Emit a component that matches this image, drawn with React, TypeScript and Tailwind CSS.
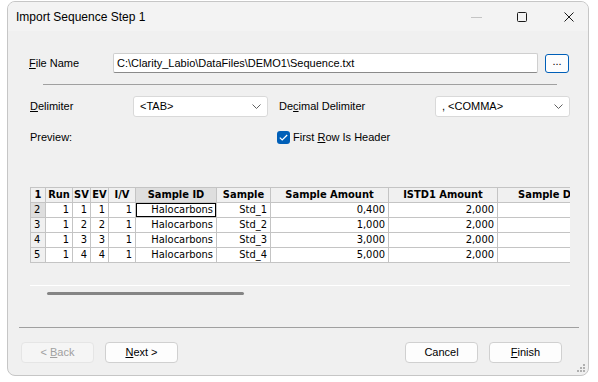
import React from "react";

const grid = "font-['DejaVu_Sans_Condensed','DejaVu_Sans',sans-serif] text-[11px] text-black";

const cols = [
  { h: "1", w: "w-[15px]" },
  { h: "Run", w: "w-[27px]" },
  { h: "SV", w: "w-[18px]" },
  { h: "EV", w: "w-[18px]" },
  { h: "I/V", w: "w-[27px]" },
  { h: "Sample ID", w: "w-[81px]" },
  { h: "Sample", w: "w-[54px]" },
  { h: "Sample Amount", w: "w-[118px]" },
  { h: "ISTD1 Amount", w: "w-[109px]" },
  { h: "Sample Description", w: "w-[150px]" },
];

const rows = [
  ["2", "1", "1", "1", "1", "Halocarbons", "Std_1", "0,400", "2,000", ""],
  ["3", "1", "2", "2", "1", "Halocarbons", "Std_2", "1,000", "2,000", ""],
  ["4", "1", "3", "3", "1", "Halocarbons", "Std_3", "3,000", "2,000", ""],
  ["5", "1", "4", "4", "1", "Halocarbons", "Std_4", "5,000", "2,000", ""],
];

const Chevron = () => (
  <svg width="9" height="5" viewBox="0 0 9 5" className="mr-[6px]">
    <path d="M0.5 0.5 L4.5 4.5 L8.5 0.5" fill="none" stroke="#606060" strokeWidth="1" />
  </svg>
);

const Combo = ({ text }: { text: string }) => (
  <div className="w-[135px] h-[21px] bg-white border border-[#d9d9d9] rounded-[3px] flex items-center justify-between pl-[6px]">
    <span>{text}</span>
    <Chevron />
  </div>
);

const Btn = ({ children, disabled }: { children: React.ReactNode; disabled?: boolean }) => (
  <div
    className={
      disabled
        ? "w-[73px] h-[21px] rounded-[4px] border border-[#e5e5e5] bg-[#f5f5f5] text-[#a0a0a0] flex items-center justify-center"
        : "w-[73px] h-[21px] rounded-[4px] border border-[#d0d0d0] bg-[#fdfdfd] flex items-center justify-center"
    }
  >
    <span>{children}</span>
  </div>
);

export default function App() {
  return (
    <div className="w-[598px] h-[382px] bg-white pl-[7px] pt-[1px] font-['Liberation_Sans',Arial,sans-serif] text-[11px] text-black overflow-hidden">
      <div className="relative w-[582px] h-[375px] rounded-[8px] border border-[#c6c6c6] bg-[#f0f0f0] overflow-hidden flex flex-col">
        {/* title bar */}
        <div className="h-[29px] bg-[#f3f3f3] flex items-center pl-[8px] shrink-0">
          <span className="text-[12px]">Import Sequence Step 1</span>
          <div className="ml-auto flex items-center pr-[14px]">
            <svg width="11" height="10" viewBox="0 0 11 10">
              <path d="M0 5.5 H11" stroke="#c4c4c4" strokeWidth="1" />
            </svg>
            <svg width="10" height="10" viewBox="0 0 10 10" className="ml-[35px]">
              <rect x="0.5" y="0.5" width="9" height="9" rx="1" fill="none" stroke="#1a1a1a" strokeWidth="1" />
            </svg>
            <svg width="10" height="10" viewBox="0 0 10 10" className="ml-[37px]">
              <path d="M0.5 0.5 L9.5 9.5 M9.5 0.5 L0.5 9.5" stroke="#1a1a1a" strokeWidth="1" />
            </svg>
          </div>
        </div>

        {/* body */}
        <div className="flex flex-col">
          <div className="mt-[22px] flex items-center h-[20px]">
            <span className="ml-[21px] w-[84px]">
              <span className="underline">F</span>ile Name
            </span>
            <div className="w-[425px] h-[20px] bg-white border border-[#cfcfcf] border-b-[#8a8a8a] rounded-[2px] flex items-center pl-[3px]">
              C:\Clarity_Labio\DataFiles\DEMO1\Sequence.txt
            </div>
            <div className="ml-[7px] w-[24px] h-[19px] bg-[#fdfdfd] border border-[#005fb8] rounded-[3px] flex items-center justify-center leading-none pb-[3px]">
              ...
            </div>
          </div>

          <div className="mt-[11px] ml-[35px] w-[514px] h-px bg-[#a0a0a0]" />

          <div className="mt-[11px] flex items-center h-[21px]">
            <span className="ml-[22px] w-[103px]">
              <span className="underline">D</span>elimiter
            </span>
            <Combo text="<TAB>" />
            <span className="ml-[11px] w-[156px]">
              De<span className="underline">c</span>imal Delimiter
            </span>
            <Combo text=", <COMMA>" />
          </div>

          <div className="mt-[14px] flex items-center h-[13px]">
            <span className="ml-[22px] w-[247px]">Preview:</span>
            <div className="w-[13px] h-[13px] rounded-[3px] bg-[#005fb8] flex items-center justify-center">
              <svg width="9" height="7" viewBox="0 0 9 7">
                <path d="M0.8 3.6 L3.2 6 L8.2 1" fill="none" stroke="white" strokeWidth="1.2" />
              </svg>
            </div>
            <span className="ml-[3px]">
              First <span className="underline">R</span>ow Is Header
            </span>
          </div>

          {/* grid */}
          <div className={`mt-[43px] ml-[22px] w-[540px] h-[98px] overflow-hidden bg-[#f0f0f0] ${grid}`}>
            <div className="w-max border-l border-t border-[#c4c4c4]">
              <div className="flex h-[15px]">
                {cols.map((c, i) => (
                  <div
                    key={i}
                    className={`${c.w} shrink-0 border-r border-b border-[#c4c4c4] font-bold flex items-center justify-center whitespace-nowrap overflow-hidden ${
                      i === 5 ? "bg-[#dedede]" : "bg-[#f0f0f0]"
                    }`}
                  >
                    {c.h}
                  </div>
                ))}
              </div>
              {rows.map((r, ri) => (
                <div key={ri} className="flex h-[15px]">
                  {r.map((v, ci) => (
                    <div
                      key={ci}
                      className={`${cols[ci].w} shrink-0 border-r border-b border-[#c4c4c4] flex items-center whitespace-nowrap overflow-hidden ${
                        ci === 0
                          ? `justify-start pl-[3px] ${ri === 0 ? "bg-[#dedede]" : "bg-[#f0f0f0]"}`
                          : "justify-end pr-[3px] bg-white"
                      } ${ri === 0 && ci === 5 ? "shadow-[inset_0_0_0_1px_#000]" : ""}`}
                    >
                      {v}
                    </div>
                  ))}
                </div>
              ))}
            </div>
          </div>
          <div className="ml-[22px] w-[540px] h-px bg-white" />
          <div className="mt-[6px] ml-[39px] w-[197px] h-[3px] rounded-full bg-[#858585]" />

          <div className="mt-[32px] ml-[11px] w-[560px] h-px bg-[#a0a0a0]" />

          <div className="mt-[14px] flex items-center">
            <div className="ml-[13px]">
              <Btn disabled>
                {"< "}
                <span className="underline">B</span>ack
              </Btn>
            </div>
            <div className="ml-[11px]">
              <Btn>
                <span className="underline">N</span>ext &gt;
              </Btn>
            </div>
            <div className="ml-auto">
              <Btn>Cancel</Btn>
            </div>
            <div className="ml-[11px] mr-[26px]">
              <Btn>
                <span className="underline">F</span>inish
              </Btn>
            </div>
          </div>
        </div>

        <svg width="8" height="8" viewBox="0 0 8 8" className="absolute right-[3px] bottom-[3px]">
          <rect x="6" y="0" width="2" height="2" fill="#b0b0b0" />
          <rect x="3" y="3" width="2" height="2" fill="#b0b0b0" />
          <rect x="6" y="3" width="2" height="2" fill="#b0b0b0" />
          <rect x="0" y="6" width="2" height="2" fill="#b0b0b0" />
          <rect x="3" y="6" width="2" height="2" fill="#b0b0b0" />
          <rect x="6" y="6" width="2" height="2" fill="#b0b0b0" />
        </svg>
      </div>
    </div>
  );
}
